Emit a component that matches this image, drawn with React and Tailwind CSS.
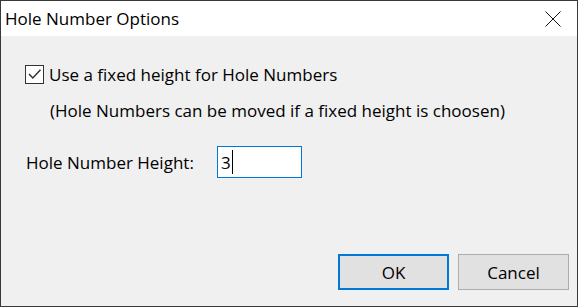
const font = { fontFamily: '"Open Sans", "Noto Sans", sans-serif' };

function CheckBox() {
  return (
    <div className="w-[19px] h-[19px] border border-[#333333] bg-white flex items-center justify-center shrink-0">
      <svg width="17" height="17" viewBox="0 0 17 17" fill="none">
        <path d="M3 8 L6.8 12 L14.5 3.8" stroke="#333333" strokeWidth="1.5" />
      </svg>
    </div>
  );
}

export default function App() {
  return (
    <div
      className="w-[578px] h-[307px] border border-[#3a3a3a] bg-[#f0f0f0] flex flex-col text-[17px] leading-[23px] text-black"
      style={font}
    >
      {/* title bar */}
      <div className="h-[35px] bg-white flex items-center justify-between pl-[4px] pr-[16px]">
        <span>Hole Number Options</span>
        <svg width="16" height="16" viewBox="0 0 16 16" fill="none">
          <path d="M0.5 0.5 L15.5 15.5 M15.5 0.5 L0.5 15.5" stroke="#111111" strokeWidth="1" />
        </svg>
      </div>

      {/* body */}
      <div className="flex-1 flex flex-col">
        <div className="flex items-center gap-[5px] pl-[24px] mt-[27px]">
          <CheckBox />
          <span>Use a fixed height for Hole Numbers</span>
        </div>
        <div className="pl-[49px] mt-[13px]">
          (Hole Numbers can be moved if a fixed height is choosen)
        </div>

        <div className="flex items-center pl-[25px] mt-[24px]">
          <span className="w-[191px]">Hole Number Height:</span>
          <div className="w-[85px] h-[32px] border border-[#0078d7] bg-white flex items-center pl-[3px]">
            <span>3</span>
            <span className="w-[1px] h-[24px] bg-black ml-[1px]" />
          </div>
        </div>

        <div className="mt-auto flex justify-end gap-[9px] pr-[8px] pb-[16px]">
          <button className="w-[111px] h-[36px] border-2 border-[#0078d7] bg-[#e1e1e1] flex items-center justify-center">
            OK
          </button>
          <button className="w-[111px] h-[36px] border border-[#adadad] bg-[#e1e1e1] flex items-center justify-center">
            Cancel
          </button>
        </div>
      </div>
    </div>
  );
}
